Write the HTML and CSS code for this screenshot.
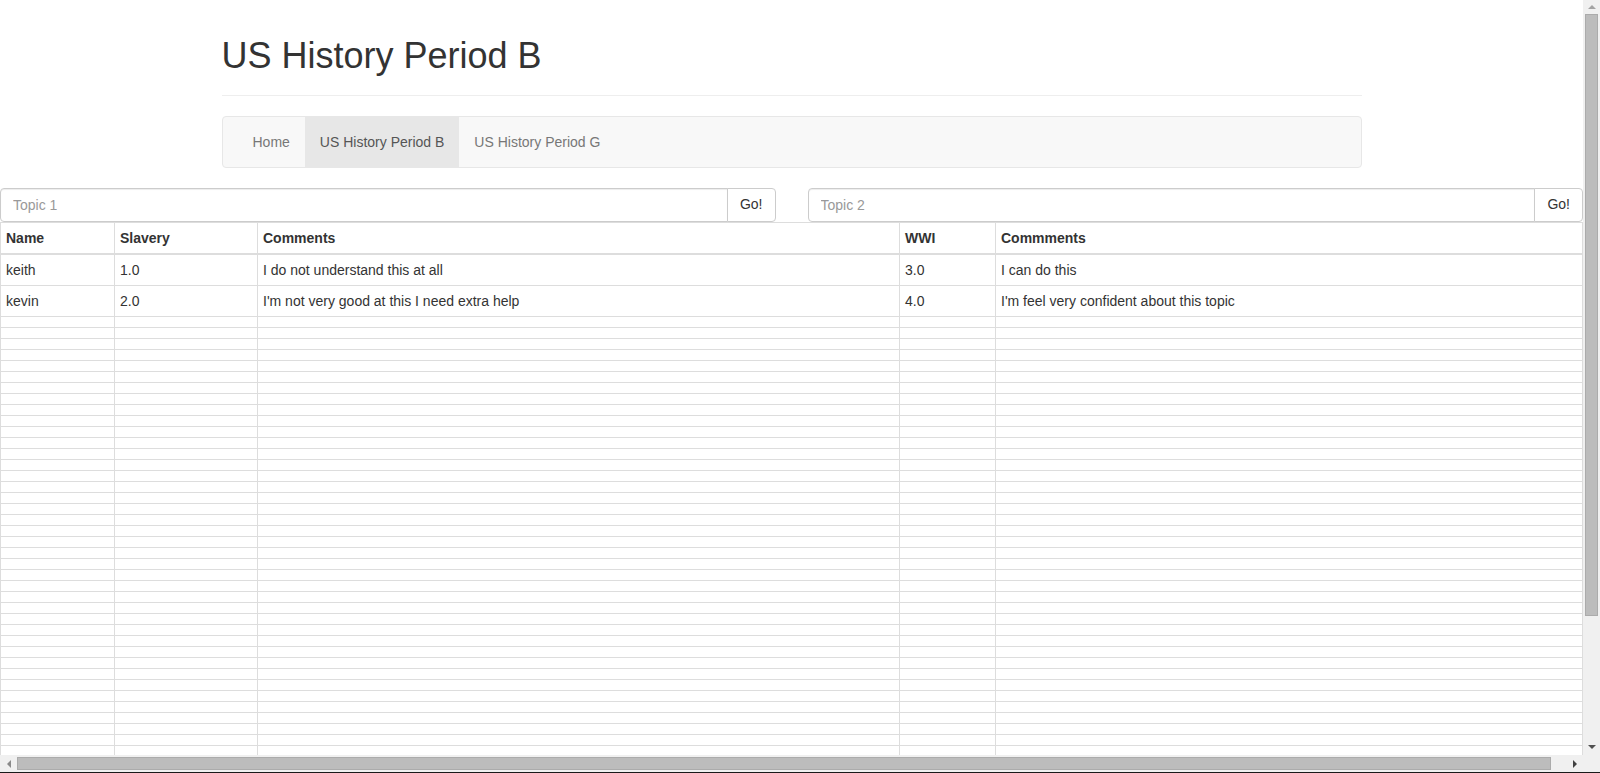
FILE: index.html
```html
<!DOCTYPE html>
<html lang="en">
<head>
    <meta charset="UTF-8">
    <meta name="viewport" content="width=device-width, initial-scale=1.0">
    <title>US History Period B</title>
    <link rel="stylesheet" href="styles.css">
</head>
<body>
    <div class="window">
        <div class="viewport">
            <div class="container">
                <div class="page-header">
                    <h1>US History Period B</h1>
                </div>

                <nav class="navbar">
                    <ul class="nav">
                        <li><a href="#">Home</a></li>
                        <li class="active"><a href="#">US History Period B</a></li>
                        <li><a href="#">US History Period G</a></li>
                    </ul>
                </nav>
            </div>

            <div class="topics">
                <div class="input-group">
                    <input type="text" class="form-control" placeholder="Topic 1">
                    <button class="btn">Go!</button>
                </div>
                <div class="input-group">
                    <input type="text" class="form-control" placeholder="Topic 2">
                    <button class="btn">Go!</button>
                </div>
            </div>

            <table class="grades">
                <thead>
                    <tr>
                        <th class="col-name">Name</th>
                        <th class="col-score">Slavery</th>
                        <th class="col-comment">Comments</th>
                        <th class="col-score2">WWI</th>
                        <th>Commments</th>
                    </tr>
                </thead>
                <tbody id="rows">
                    <tr>
                        <td>keith</td>
                        <td>1.0</td>
                        <td>I do not understand this at all</td>
                        <td>3.0</td>
                        <td>I can do this</td>
                    </tr>
                    <tr>
                        <td>kevin</td>
                        <td>2.0</td>
                        <td>I'm not very good at this I need extra help</td>
                        <td>4.0</td>
                        <td>I'm feel very confident about this topic</td>
                    </tr>
                </tbody>
            </table>
        </div>

        <div class="vscroll">
            <div class="arrow up"></div>
            <div class="thumb"></div>
            <div class="track"></div>
            <div class="arrow down"></div>
        </div>
        <div class="hscroll">
            <div class="arrow left"></div>
            <div class="thumb"></div>
            <div class="track"></div>
            <div class="arrow right"></div>
        </div>
        <div class="corner"></div>
        <div class="frame-edge"></div>
    </div>

    <script>
        // blank rows for the rest of the sheet
        const rows = document.getElementById('rows');
        for (let i = 0; i < 44; i++) {
            const tr = document.createElement('tr');
            for (let j = 0; j < 5; j++) {
                tr.appendChild(document.createElement('td'));
            }
            rows.appendChild(tr);
        }
    </script>
</body>
</html>
```

FILE: styles.css
```css
:root {
    --text: #333333;
    --muted: #777777;
    --border: #dddddd;
    --input-border: #cccccc;
    --nav-bg: #f8f8f8;
    --nav-border: #e7e7e7;
    --scroll-track: #f0f0f0;
    --scroll-thumb: #bcbcbc;
}

* {
    box-sizing: border-box;
}

body {
    margin: 0;
    font-family: "Liberation Sans", Arial, sans-serif;
    font-size: 14px;
    line-height: 1.42857;
    color: var(--text);
    background: #ffffff;
    overflow: hidden;
}

.window {
    display: grid;
    grid-template-columns: 1583px 17px;
    grid-template-rows: 755px 17px 1px;
    height: 773px;
}

.viewport {
    overflow: hidden;
    background: #ffffff;
}

.container {
    width: 1170px;
    margin: 0 auto;
    padding: 0 15px;
}

.page-header {
    margin: 36px 0 20px;
    padding-bottom: 9px;
    border-bottom: 1px solid #eeeeee;
}

h1 {
    margin: 0 0 10px;
    font-size: 36px;
    font-weight: 500;
    line-height: 1.1;
}

.navbar {
    min-height: 50px;
    margin-bottom: 20px;
    padding: 0 15px;
    background-color: var(--nav-bg);
    border: 1px solid var(--nav-border);
    border-radius: 4px;
}

.nav {
    display: flex;
    margin: 0;
    padding: 0;
    list-style: none;
}

.nav a {
    display: block;
    padding: 15px;
    line-height: 20px;
    color: var(--muted);
    text-decoration: none;
}

.nav .active a {
    background-color: var(--nav-border);
    color: #555555;
}

.topics {
    display: flex;
    gap: 32px;
}

.input-group {
    display: flex;
    flex: 1;
}

.form-control {
    flex: 1;
    min-width: 0;
    height: 34px;
    padding: 6px 12px;
    font-family: inherit;
    font-size: 14px;
    line-height: 1.42857;
    color: #555555;
    background: #ffffff;
    border: 1px solid var(--input-border);
    border-radius: 4px 0 0 4px;
    box-shadow: inset 0 1px 1px rgba(0, 0, 0, 0.075);
}

.form-control::placeholder {
    color: #999999;
}

.btn {
    margin-left: -1px;
    padding: 6px 12px;
    font-family: inherit;
    font-size: 14px;
    line-height: 1.42857;
    color: var(--text);
    background: #ffffff;
    border: 1px solid var(--input-border);
    border-radius: 0 4px 4px 0;
}

.grades {
    width: 100%;
    table-layout: fixed;
    border-collapse: collapse;
    border: 1px solid var(--border);
}

.grades th,
.grades td {
    padding: 5px;
    line-height: 20px;
    text-align: left;
    vertical-align: top;
    border: 1px solid var(--border);
}

.grades thead th {
    vertical-align: bottom;
    border-bottom-width: 2px;
}

.col-name { width: 114px; }
.col-score { width: 143px; }
.col-comment { width: 642px; }
.col-score2 { width: 96px; }

/* fake window scrollbars */
.vscroll,
.hscroll,
.corner {
    display: flex;
    background: var(--scroll-track);
}

.vscroll {
    flex-direction: column;
}

.vscroll .thumb {
    height: 602px;
    margin: 0 2px;
}

.hscroll .thumb {
    width: 1534px;
    margin: 2px 0;
}

.thumb {
    background: var(--scroll-thumb);
    border: 1px solid #ababab;
}

.track {
    flex: 1;
}

.arrow {
    display: flex;
    align-items: center;
    justify-content: center;
}

.vscroll .arrow.up { height: 14px; }
.vscroll .arrow.down { height: 17px; }
.hscroll .arrow { width: 17px; }

.arrow::after {
    content: "";
    width: 0;
    height: 0;
    border: 4px solid transparent;
}

.arrow.up::after {
    border-bottom-color: #a3a3a3;
    border-top-width: 0;
}

.arrow.down::after {
    border-top-color: #505050;
    border-bottom-width: 0;
}

.arrow.left::after {
    border-right-color: #8a8a8a;
    border-left-width: 0;
}

.arrow.right::after {
    border-left-color: #404040;
    border-right-width: 0;
}

.frame-edge {
    grid-column: 1 / 3;
    background: #1a1a1a;
}
```
